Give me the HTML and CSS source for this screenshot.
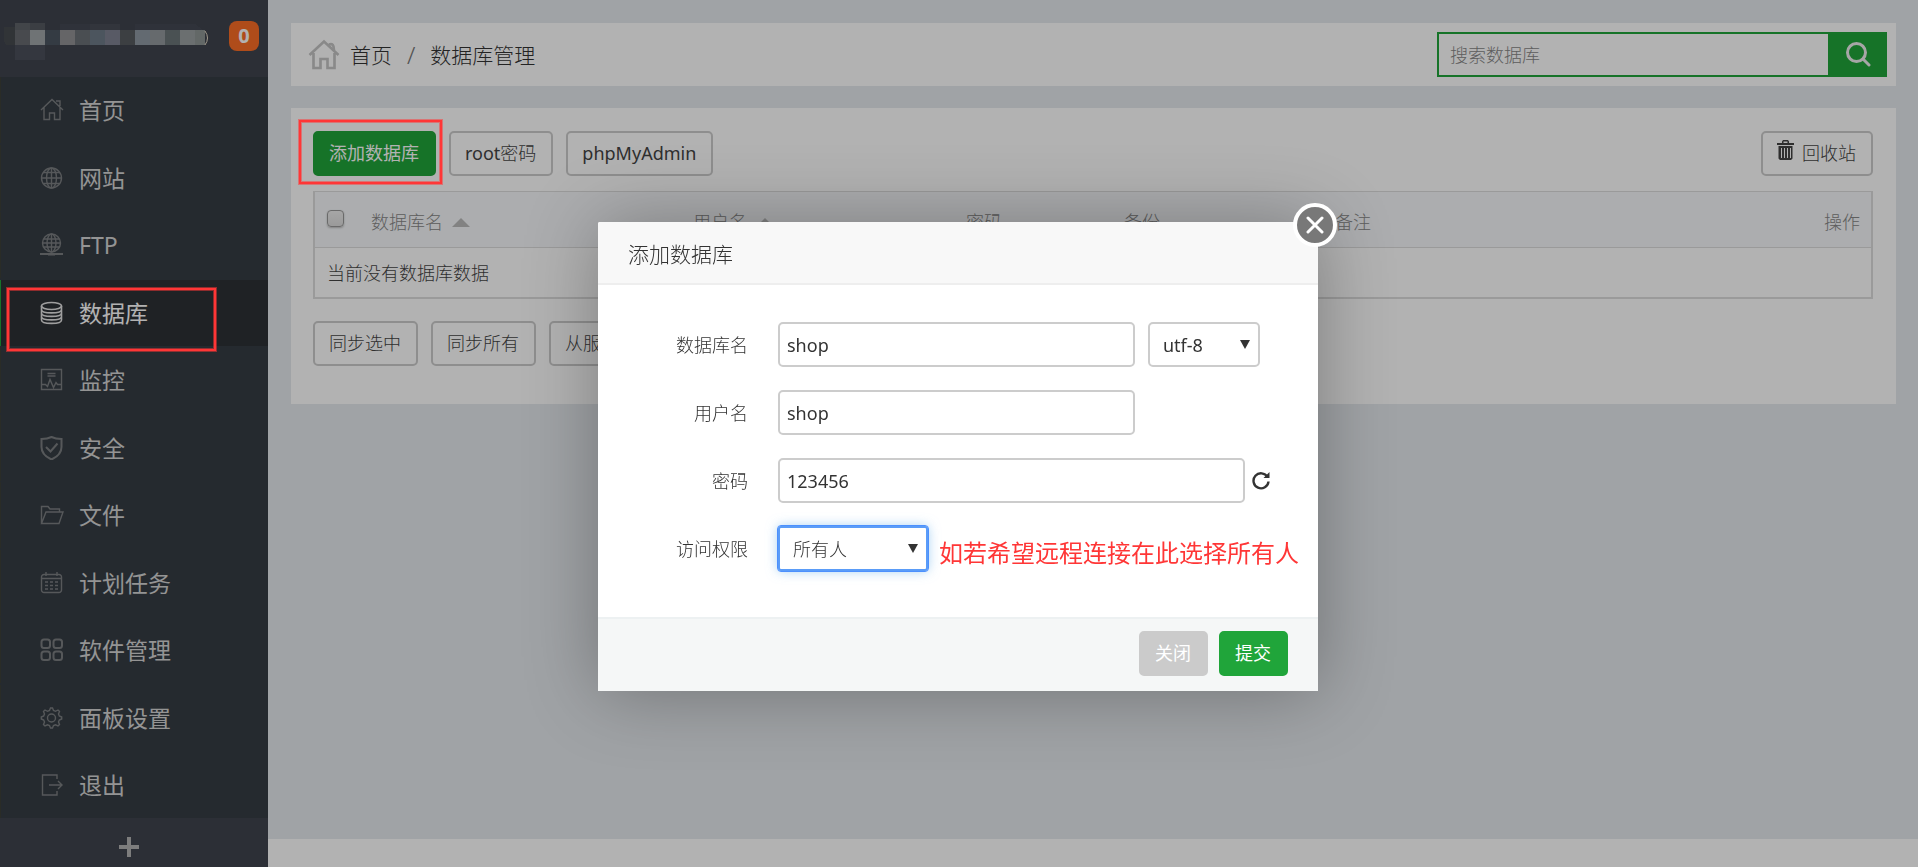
FILE: index.html
```html
<!DOCTYPE html>
<html lang="zh-CN">
<head>
<meta charset="utf-8">
<title>数据库管理</title>
<link rel="stylesheet" href="styles.css">
</head>
<body>
<div class="layout">
  <aside class="sidebar">
    <div class="account">
      <svg class="account-name" width="208" height="60" viewBox="0 0 208 60" shape-rendering="crispEdges" aria-hidden="true">
        <path fill="#474b50" d="M4 27h11v18H6l-2-4z"/>
        <path fill="#5f6369" d="M15 23h15v7H15z"/><path fill="#555961" d="M30 23h15v7H30z"/>
        <path fill="#686b70" d="M15 30h15v15H15z"/><path fill="#9fa5a8" d="M30 30h15v15H30z"/>
        <path fill="#4b5560" d="M45 30h15v15H45z"/><path fill="#919194" d="M60 30h15v15H60z"/>
        <path fill="#6b7076" d="M75 30h15v15H75z"/><path fill="#6d7a87" d="M90 30h15v15H90z"/>
        <path fill="#7e8291" d="M105 30h15v15h-15z"/><path fill="#565b5f" d="M120 30h15v15h-15z"/>
        <path fill="#8e98a3" d="M135 30h15v15h-15z"/><path fill="#92999c" d="M150 30h15v15h-15z"/>
        <path fill="#6b7478" d="M165 30h15v15h-15z"/><path fill="#9aa0a1" d="M180 30h15v15h-15z"/>
        <path fill="#8f9594" d="M195 30h10v15h-10z"/>
        <path fill="#4b4f5b" d="M15 45h30v15H15z"/><path fill="#444853" d="M60 24h30v6H60zM135 24h60l8 6h-68z"/><path fill="#484c57" d="M90 24h30v6H90z"/>
        <path fill="none" stroke="#e8dcc8" shape-rendering="auto" d="M205 31q5 7 0 14"/>
      </svg>
      <span class="badge">0</span>
    </div>
    <nav class="menu">
      <a class="menu-item" href="#"><svg class="icon" viewBox="0 0 24 24"><path d="M1 12 12 1.500 23 12M4 9.500V21.500h5.500V15h5v6.500H20V9.500M16 3h4v5"/></svg>首页</a>
      <a class="menu-item" href="#"><svg class="icon" viewBox="0 0 24 24"><circle cx="11.500" cy="12" r="10"/><ellipse cx="11.500" cy="12" rx="5" ry="10"/><path d="M11.500 2v20M1.500 12h20M3.500 6.500h16M3.500 17.500h16"/></svg>网站</a>
      <a class="menu-item" href="#"><svg class="icon" viewBox="0 0 24 24"><circle cx="11.500" cy="10" r="9"/><ellipse cx="11.500" cy="10" rx="4.500" ry="9"/><path d="M11.500 1v18M3 10h17M4 6h15M4 14h15"/><path stroke-width="2.200" d="M0 21h23M8 21.500h7"/></svg>FTP</a>
      <a class="menu-item active" href="#"><svg class="icon" viewBox="0 0 24 24"><ellipse cx="11.500" cy="5" rx="10" ry="3.500"/><path d="M1.500 5v14c0 4.500 20 4.500 20 0V5M1.500 8.500c0 4.500 20 4.500 20 0M1.500 12c0 4.500 20 4.500 20 0M1.500 15.500c0 4.500 20 4.500 20 0"/></svg>数据库<span class="mark mark-menu"></span></a>
      <a class="menu-item" href="#"><svg class="icon" viewBox="0 0 24 24"><path d="M1.500 1.500h20v20h-20zM7.500 5.500h8M7.500 8h8M1.500 16.500h4l2 2 2.500-7 3.500 8 2.500-5 1.500 2h4"/></svg>监控</a>
      <a class="menu-item" href="#"><svg class="icon icon-bold" viewBox="0 0 24 24"><path d="M11.500 1C8.500 2.500 5 3 1.500 3v8c0 6 4.500 10 10 12.500 5.500-2.500 10-6.500 10-12.500V3c-3.500 0-7-.5-10-2zM6 11l4.500 4.500 7-8"/></svg>安全</a>
      <a class="menu-item" href="#"><svg class="icon" viewBox="0 0 24 24"><path d="M1.500 20V3.500H8l2 2.500h9.500v3M1.500 20.500h17.500L23 9H6z"/></svg>文件</a>
      <a class="menu-item" href="#"><svg class="icon" viewBox="0 0 24 24"><path d="M4 3.500h15a2.500 2.500 0 0 1 2.500 2.500v13a2.500 2.500 0 0 1-2.500 2.500H4A2.500 2.500 0 0 1 1.500 19V6A2.500 2.500 0 0 1 4 3.500zM1.500 7.500h20M6 1v4M17 1v4"/><path stroke-dasharray="3 2" d="M5 11h14M5 14.500h14M5 18h14"/></svg>计划任务</a>
      <a class="menu-item" href="#"><svg class="icon icon-bold" viewBox="0 0 24 24"><rect x="1.500" y="1.500" width="8.500" height="8.500" rx="2.500"/><rect x="13.500" y="1.500" width="8.500" height="8.500" rx="2.500"/><rect x="1.500" y="13.500" width="8.500" height="8.500" rx="2.500"/><rect x="13.500" y="13.500" width="8.500" height="8.500" rx="2.500"/></svg>软件管理</a>
      <a class="menu-item" href="#"><svg class="icon" viewBox="0 0 24 24"><circle cx="11.500" cy="12" r="4"/><path d="M9.500 4.500 10.500 2h2l1 2.500 2 .8 2.500-1.300 1.500 1.500-1 2.500.8 2 2.400 1v2l-2.400 1-.8 2 1 2.500-1.500 1.500-2.500-1.200-2 .8-1 2.400h-2l-1-2.400-2-.8L5 20l-1.500-1.500 1-2.500-.8-2-2.400-1v-2l2.400-1 .8-2-1-2.500L5 4l2.500 1.300z"/></svg>面板设置</a>
      <a class="menu-item" href="#"><svg class="icon" viewBox="0 0 24 24"><path d="M17 6V2H2.500v20H17v-4M9 12h13M18 8l4 4-4 4"/></svg>退出</a>
    </nav>
    <button class="add-menu" type="button" aria-label="添加"><svg width="20" height="20" viewBox="0 0 20 20"><path d="M10 0v20M0 10h20"/></svg></button>
  </aside>

  <div class="page">
    <main class="content">
      <header class="topbar card">
        <nav class="crumbs">
          <svg class="home" viewBox="0 0 32 32"><path d="M1.500 16 16 2.500 30.500 16M5.500 14v15h7V20h7v9h7V14M21 5.500q5-2 5 5.500"/></svg>
          <a href="#">首页</a><span class="slash">/</span><span>数据库管理</span>
        </nav>
        <form class="search">
          <input type="text" placeholder="搜索数据库" aria-label="搜索数据库">
          <button type="button" aria-label="搜索"><svg width="26" height="26" viewBox="0 0 26 26"><circle cx="11.500" cy="11.500" r="9"/><path d="m18 18 6 6"/></svg></button>
        </form>
      </header>

      <section class="panel card">
        <div class="toolbar">
          <button class="btn primary" type="button">添加数据库<span class="mark mark-add"></span></button>
          <button class="btn" type="button"><span class="latin">root</span>密码</button>
          <button class="btn latin" type="button">phpMyAdmin</button>
          <button class="btn recycle" type="button"><svg width="17" height="20" viewBox="0 0 17 20"><path d="M0 3h5V1.500L6 0h5l1 1.500V3h5v2H0zM6.500 3h4V1.500h-4zM1.500 6h14v12.500L14 20H3l-1.500-1.500zM4 8v10h1V8zm3 0v10h1V8zm3 0v10h1V8zm3 0v10h1V8z" fill-rule="evenodd"/></svg>回收站</button>
        </div>
        <table class="data">
          <colgroup><col class="c-check"><col class="c-name"><col class="c-user"><col class="c-pass"><col class="c-backup"><col class="c-note"><col></colgroup>
          <thead>
            <tr>
              <th><input class="tick" type="checkbox" aria-label="全选"></th>
              <th>数据库名<span class="sort"></span></th>
              <th>用户名<span class="sort"></span></th>
              <th>密码</th><th>备份</th><th>备注</th><th class="right">操作</th>
            </tr>
          </thead>
          <tbody><tr><td colspan="7">当前没有数据库数据</td></tr></tbody>
        </table>
        <div class="toolbar">
          <button class="btn" type="button">同步选中</button>
          <button class="btn" type="button">同步所有</button>
          <button class="btn" type="button">从服务器获取</button>
        </div>
      </section>
    </main>
    <footer class="page-foot"></footer>
  </div>
</div>

<div class="shade"></div>
<div class="modal-wrap">
  <div class="modal" role="dialog" aria-labelledby="modal-title">
    <button class="close" type="button" aria-label="关闭窗口"><svg width="18" height="18" viewBox="0 0 18 18"><path d="m2 2 14 14M16 2 2 16"/></svg></button>
    <h2 class="modal-title" id="modal-title">添加数据库</h2>
    <form class="fields">
      <div class="row">
        <label for="db-name">数据库名</label>
        <input class="text" id="db-name" type="text" value="shop">
        <span class="pick charset"><select class="latin" aria-label="编码"><option>utf-8</option></select></span>
      </div>
      <div class="row">
        <label for="db-user">用户名</label>
        <input class="text" id="db-user" type="text" value="shop">
      </div>
      <div class="row">
        <label for="db-pass">密码</label>
        <input class="text wide" id="db-pass" type="text" value="123456">
        <button class="refresh" type="button" aria-label="随机密码"><svg width="18" height="18" viewBox="0 0 18 18"><path d="M15.500 5A7.500 7.500 0 1 0 16.500 9.500" fill="none" stroke="#333" stroke-width="2.400"/><path d="M17.500 0v6h-6z" fill="#333"/></svg></button>
      </div>
      <div class="row">
        <label for="db-access">访问权限</label>
        <span class="pick access"><select id="db-access"><option>所有人</option></select></span>
        <span class="hint">如若希望远程连接在此选择所有人</span>
      </div>
    </form>
    <div class="modal-foot">
      <button class="btn grey" type="button">关闭</button>
      <button class="btn primary" type="button">提交</button>
    </div>
  </div>
</div>
</body>
</html>
```

FILE: styles.css
```css
* { box-sizing: border-box; }

body {
  margin: 0;
  font: 18px/26px "Noto Sans", "Noto Sans CJK SC", sans-serif;
  font-weight: 300;
  color: #444;
}

button, input, select { font: inherit; color: inherit; margin: 0; }
button { cursor: pointer; }
a { color: inherit; text-decoration: none; }
.latin { font-weight: 400; }

.layout { display: flex; min-height: 100vh; }

/* Sidebar */
.sidebar {
  width: 268px;
  flex: none;
  display: flex;
  flex-direction: column;
  background: #3f444e;
}
.account {
  height: 77px;
  display: flex;
  align-items: flex-start;
  justify-content: space-between;
  padding-right: 9px;
}
.badge {
  width: 30px;
  height: 30px;
  margin-top: 21px;
  border-radius: 8px;
  background: #fb6d26;
  color: #fff;
  font-size: 20px;
  font-weight: 700;
  line-height: 30px;
  text-align: center;
}
.menu {
  flex: 1;
  display: flex;
  flex-direction: column;
  justify-content: space-between;
  background: #363d44;
}
.menu-item {
  position: relative;
  height: 66px;
  display: flex;
  align-items: center;
  gap: 15px;
  padding-left: 39px;
  border-left: 1px solid #3d4038;
  color: #d4d4d4;
  font-size: 23px;
  font-weight: 400;
}
.menu-item.active { background: #2d3136; border-left-color: #20a53a; color: #fff; }
.icon {
  width: 24px;
  height: 24px;
  fill: none;
  stroke: #7c7f82;
  stroke-width: 1.4;
}
.icon-bold { stroke-width: 2; }
.active .icon { stroke: #e4e4e4; stroke-width: 1.6; }
.add-menu {
  height: 49px;
  padding: 14px 10px 0 0;
  border: 0;
  background: none;
}
.add-menu svg { stroke: #b4b4b4; stroke-width: 4; }

/* Page */
.page { flex: 1; min-width: 0; display: flex; flex-direction: column; background: #e5eaee; }
.content { flex: 1; display: flex; flex-direction: column; gap: 22px; padding: 23px 22px 22px 23px; }
.page-foot { height: 28px; background: #fff; }
.card { background: #fff; }

.topbar { display: flex; align-items: center; justify-content: space-between; padding: 9px; }
.crumbs { display: flex; align-items: center; padding-left: 8px; font-size: 21px; color: #333; }
.home { width: 32px; height: 32px; margin-right: 10px; fill: none; stroke: #c4c4c4; stroke-width: 2.6; }
.slash { margin: 0 15px; color: #777; font-size: 24px; }
.search { display: flex; width: 450px; height: 45px; }
.search input {
  flex: 1;
  min-width: 0;
  padding: 0 11px;
  border: 2px solid #20a53a;
  border-right: 0;
  background: #fff;
}
.search input::placeholder { color: #888; }
.search button { width: 59px; padding: 5px 0 0; border: 0; background: #20a53a; }
.search svg { fill: none; stroke: #eee; stroke-width: 3; stroke-linecap: round; }

.panel { padding: 23px 23px 38px 22px; }
.toolbar { display: flex; gap: 13px; }
.btn {
  position: relative;
  height: 45px;
  padding: 0 15px 1px 14px;
  border: 2px solid #ccc;
  border-radius: 5px;
  background: #fff;
  white-space: nowrap;
}
.btn.primary { border-color: #20a53a; background: #20a53a; color: #fff; }
.btn.grey { border-color: #cbcbcb; background: #cbcbcb; color: #fff; }
.modal-foot .btn, .toolbar .primary { font-weight: 400; }
.recycle { margin-left: auto; }
.recycle svg { margin-right: 8px; fill: #444; }

.data {
  width: 100%;
  margin: 15px 0 22px;
  table-layout: fixed;
  border-collapse: separate;
  border-spacing: 0;
  border: 2px solid #ddd;
  border-top-width: 1px;
}
.data th { height: 56px; padding: 5px 0 0; background: #f6f8fb; border-bottom: 1px solid #ddd; color: #888; font-weight: 300; text-align: left; white-space: nowrap; }
.data th:first-child { padding: 0 0 2px 12px; }
.data th.right { padding-right: 11px; text-align: right; }
.data td { height: 49px; padding: 0 12px; }
.c-check { width: 56px; }
.c-name { width: 322px; }
.c-user { width: 273px; }
.c-pass { width: 158px; }
.c-backup { width: 211px; }
.c-note { width: 300px; }
.tick {
  appearance: none;
  display: block;
  width: 17px;
  height: 17px;
  margin-bottom: 1px;
  border: 1px solid #999;
  border-radius: 4px;
  background: linear-gradient(#eee, #ddd);
  box-shadow: 0 1px 2px #bbb;
}
.sort {
  display: inline-block;
  margin-left: 9px;
  border: 9px solid transparent;
  border-top: 0;
  border-bottom-color: #bbb;
  vertical-align: 2px;
}

/* Dialog */
.shade { position: fixed; inset: 0; z-index: 10; background: rgba(0, 0, 0, .3); }
.modal-wrap {
  position: fixed;
  inset: 0;
  z-index: 30;
  display: flex;
  align-items: center;
  justify-content: center;
  padding: 46px 2px 0 0;
}
.modal {
  position: relative;
  width: 720px;
  border-radius: 2px;
  background: #fff;
  box-shadow: 1px 1px 75px rgba(0, 0, 0, .3);
  color: #333;
}
.close {
  position: absolute;
  top: -19px;
  right: -19px;
  width: 44px;
  height: 44px;
  display: grid;
  place-items: center;
  padding: 0;
  border: 4px solid #fff;
  border-radius: 50%;
  background: #787878;
}
.close svg { fill: none; stroke: #fff; stroke-width: 3; stroke-linecap: round; }
.modal-title {
  margin: 0;
  height: 63px;
  padding: 0 30px;
  border-bottom: 2px solid #eee;
  border-radius: 2px 2px 0 0;
  background: #f8f8f8;
  font-size: 21px;
  font-weight: 300;
  line-height: 64px;
}
.fields { display: flex; flex-direction: column; gap: 23px; padding: 37px 0 46px; }
.row { display: flex; align-items: center; }
.row label { width: 150px; margin-right: 30px; text-align: right; }
.text { width: 357px; height: 45px; padding: 0 7px; border: 2px solid #ccc; border-radius: 5px; background: #fff; font-weight: 400; }
.text.wide { width: 467px; }
.pick { position: relative; }
.pick::after {
  content: "";
  position: absolute;
  right: 10px;
  top: 18px;
  border: 5px solid transparent;
  border-top: 9px solid #333;
  border-bottom: 0;
}
.pick select {
  appearance: none;
  display: block;
  width: 100%;
  height: 45px;
  padding: 0 13px;
  border: 2px solid #ccc;
  border-radius: 5px;
  background: #fff;
}
.charset { width: 112px; margin-left: 13px; }
.access { width: 150px; }
.access select {
  border-color: #5a9cf8;
  border-radius: 3px;
  outline: 1px solid #4d90fe;
  box-shadow: 0 0 12px rgba(102, 175, 233, .6);
}
.refresh { display: grid; margin-left: 7px; padding: 0; border: 0; background: none; }
.hint { margin: 8px 0 0 11px; color: #ff3636; font-size: 24px; font-weight: 400; white-space: nowrap; }
.modal-foot {
  display: flex;
  justify-content: flex-end;
  gap: 11px;
  padding: 12px 30px 15px;
  border-top: 2px solid #edf1f2;
  background: #f5f7f7;
}

/* Red highlight frames */
.mark {
  position: absolute;
  z-index: 20;
  border: 2px solid #ff3636;
  box-shadow: 0 0 0 1px rgba(255, 54, 54, .5), inset 0 0 0 1px rgba(255, 54, 54, .5);
}
.mark-menu { left: 6px; top: 8px; width: 209px; height: 63px; }
.mark-add { inset: -13px -8px -10px -16px; }
```
